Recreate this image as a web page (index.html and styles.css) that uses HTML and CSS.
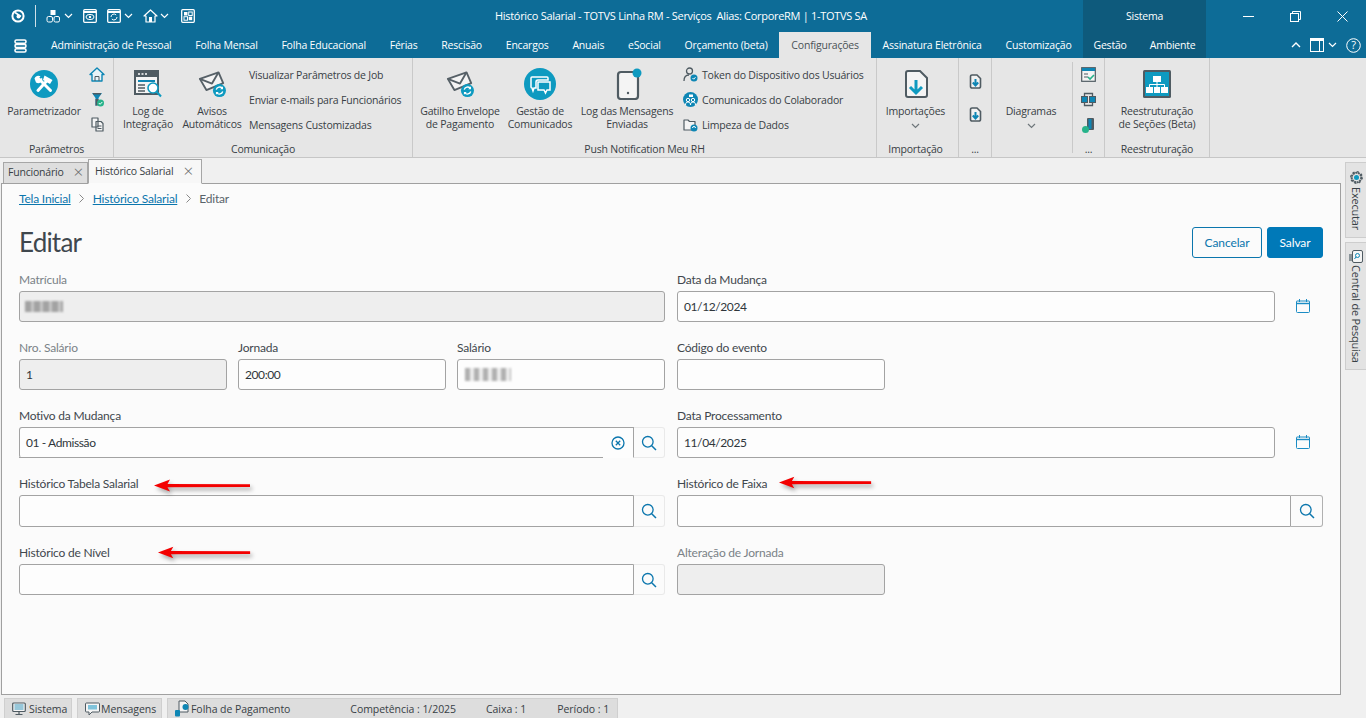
FILE: index.html
```html
<!DOCTYPE html>
<html lang="pt-BR">
<head>
<meta charset="utf-8">
<title>Histórico Salarial</title>
<link rel="stylesheet" href="styles.css">
</head>
<body>
<svg class="defs" width="0" height="0" aria-hidden="true">
  <defs>
    <symbol id="env" viewBox="0 0 30 30">
      <g fill="none" stroke="#566067" stroke-width="2" stroke-linejoin="round">
        <path d="M2 9.500 22 2.500 27 14 9 21.500Z" fill="#f4f4f4"/>
        <path d="M2 9.500 15 14.500 22 2.500"/>
      </g>
      <circle cx="23" cy="22" r="7" fill="#0e9ac0"/>
      <path d="M19.500 21a3.800 3.800 0 0 1 6.500-1.500M26.500 23a3.800 3.800 0 0 1-6.500 1.500" fill="none" stroke="#fff" stroke-width="1.400"/>
      <path d="M26.800 17.500v3h-3zM19.200 26.500v-3h3z" fill="#fff"/>
    </symbol>
    <symbol id="search" viewBox="0 0 16 16">
      <circle cx="6.800" cy="6.800" r="5.300" fill="none" stroke="#0b76ad" stroke-width="1.300"/>
      <path d="M10.700 10.700 15 15" stroke="#0b76ad" stroke-width="1.500" fill="none"/>
    </symbol>
    <symbol id="cal" viewBox="0 0 14 15">
      <path d="M1 3h12a.5.5 0 0 1 .5.5v10a1 1 0 0 1-1 1h-11a1 1 0 0 1-1-1v-10A.5.5 0 0 1 1 3Z" fill="none" stroke="#1b8cc4" stroke-width="1"/>
      <path d="M.5 5.500h13" stroke="#1b8cc4" stroke-width="1.400"/>
      <path d="M3.500 1v3M10.500 1v3" stroke="#1b8cc4" stroke-width="1"/>
    </symbol>
    <symbol id="doc" viewBox="0 0 13 15">
      <path d="M3 1h5l3.500 3.500V12.500a1.500 1.500 0 0 1-1.500 1.500H3a1.500 1.500 0 0 1-1.500-1.500v-10A1.500 1.500 0 0 1 3 1Z" fill="#f2f2f2" stroke="#4f5b62" stroke-width="1.600"/>
      <path d="M6.500 5v6M3.800 8.500l2.700 3 2.700-3" fill="none" stroke="#0e86b4" stroke-width="2"/>
    </symbol>
    <symbol id="chev" viewBox="0 0 9 6">
      <path d="M1 1l3.500 3.500L8 1" fill="none" stroke="currentColor" stroke-width="1.200"/>
    </symbol>
    <symbol id="arrow" viewBox="0 0 100 14">
      <path d="M1 6.500 17 .5 14.500 5 97 5.200V8L14.500 8.200 17 12.500Z" fill="#f30000"/>
    </symbol>
  </defs>
</svg>

<div class="app">
  <header class="titlebar">
    <div class="qat">
      <svg class="q-logo" width="14" height="14" viewBox="0 0 14 14"><circle cx="7" cy="7" r="5.600" fill="none" stroke="#fff" stroke-width="2"/><path d="M4 3.500 10 7.500" stroke="#fff" stroke-width="1.600"/><circle cx="7.500" cy="7.500" r="2" fill="#fff"/></svg>
      <span class="q-div"></span>
      <svg class="q-a" width="15" height="14" viewBox="0 0 15 14"><rect x="4.500" y="1" width="5" height="5" fill="#fff"/><rect x="1" y="7.500" width="5.500" height="5.500" rx="1.500" fill="none" stroke="#fff"/><rect x="8" y="7.500" width="5.500" height="5.500" rx="1.500" fill="none" stroke="#fff"/></svg>
      <svg class="q-chev" width="9" height="6"><use href="#chev"/></svg>
      <svg class="q-b" width="14" height="14" viewBox="0 0 14 14"><rect x=".7" y=".7" width="12.600" height="12.600" rx="1" fill="none" stroke="#fff" stroke-width="1.300"/><path d="M1 3h12" stroke="#fff" stroke-width="2"/><ellipse cx="7" cy="8" rx="4" ry="2.600" fill="none" stroke="#fff"/><circle cx="7" cy="8" r="1.200" fill="#fff"/></svg>
      <svg class="q-c" width="14" height="14" viewBox="0 0 14 14"><rect x=".7" y=".7" width="12.600" height="12.600" rx="1" fill="none" stroke="#fff" stroke-width="1.300"/><path d="M1 3h12" stroke="#fff" stroke-width="2"/><path d="M4 8a3 3 0 0 1 5.200-2M10 8a3 3 0 0 1-5.200 2" fill="none" stroke="#fff"/></svg>
      <svg class="q-chev" width="9" height="6"><use href="#chev"/></svg>
      <svg class="q-d" width="15" height="14" viewBox="0 0 15 14"><path d="M7.500 1 14 7h-2v6H3V7H1Z" fill="none" stroke="#fff" stroke-width="1.200" stroke-linejoin="round"/><rect x="6" y="8" width="3" height="5" fill="#fff"/></svg>
      <svg class="q-chev q-chev-d" width="9" height="6"><use href="#chev"/></svg>
      <svg class="q-e" width="14" height="14" viewBox="0 0 14 14"><rect x=".7" y=".7" width="12.600" height="12.600" rx="1" fill="none" stroke="#fff" stroke-width="1.300"/><rect x="3" y="3" width="3.500" height="3.500" fill="#fff"/><rect x="7.700" y="3" width="3.500" height="3.500" fill="none" stroke="#fff"/><rect x="3" y="7.700" width="3.500" height="3.500" fill="none" stroke="#fff"/><rect x="7.700" y="7.700" width="3.500" height="3.500" fill="#fff"/></svg>
    </div>
    <div class="app-title">Histórico Salarial - TOTVS Linha RM - Serviços&nbsp; Alias: CorporeRM | 1-TOTVS SA</div>
    <div class="ctx-title">Sistema</div>
    <div class="winctl">
      <svg width="11" height="11" viewBox="0 0 11 11"><path d="M0 5.500h11" stroke="#fff"/></svg>
      <svg width="11" height="11" viewBox="0 0 11 11"><rect x=".5" y="2.500" width="8" height="8" fill="none" stroke="#fff"/><path d="M2.500 2.500v-2h8v8h-2" fill="none" stroke="#fff"/></svg>
      <svg width="11" height="11" viewBox="0 0 11 11"><path d="M.5.500l10 10M10.500.500l-10 10" stroke="#fff"/></svg>
    </div>
  </header>

  <nav class="tabsbar">
    <div class="tabs-main">
      <svg class="menu-ico" width="13" height="14" viewBox="0 0 13 14"><g fill="none" stroke="#fff" stroke-width="1.600"><rect x="1" y="1" width="11" height="3.200" rx="1.500"/><rect x="1" y="5.400" width="11" height="3.200" rx="1.500"/><rect x="1" y="9.800" width="11" height="3.200" rx="1.500"/></g></svg>
      <span class="rtab">Administração de Pessoal</span>
      <span class="rtab">Folha Mensal</span>
      <span class="rtab">Folha Educacional</span>
      <span class="rtab">Férias</span>
      <span class="rtab">Rescisão</span>
      <span class="rtab">Encargos</span>
      <span class="rtab">Anuais</span>
      <span class="rtab">eSocial</span>
      <span class="rtab">Orçamento (beta)</span>
      <span class="rtab rtab-on">Configurações</span>
      <span class="rtab">Assinatura Eletrônica</span>
      <span class="rtab">Customização</span>
    </div>
    <div class="ctx-tabs">
      <span class="rtab rtab-ctx">Gestão</span>
      <span class="rtab rtab-ctx">Ambiente</span>
    </div>
    <div class="rb-tools">
      <svg width="10" height="6" viewBox="0 0 10 6"><path d="M1 5l4-4 4 4" fill="none" stroke="#fff" stroke-width="1.400"/></svg>
      <svg class="rb-panel" width="14" height="14" viewBox="0 0 14 14"><rect x=".5" y=".5" width="13" height="13" fill="none" stroke="#fff"/><rect x="1" y="1" width="12" height="2" fill="#fff"/><path d="M9.500 3v10" stroke="#fff"/></svg>
      <svg class="rb-chev" width="9" height="6"><use href="#chev"/></svg>
      <svg class="rb-help" width="15" height="15" viewBox="0 0 15 15"><circle cx="7.500" cy="7.500" r="6.800" fill="none" stroke="#fff"/><text x="7.500" y="11.200" text-anchor="middle" class="help-q">?</text></svg>
    </div>
  </nav>

  <section class="ribbon">
    <div class="group g-param">
      <div class="g-body">
        <div class="big b-param">
          <svg class="big-ico" width="28" height="28" viewBox="0 0 28 28"><circle cx="14" cy="14" r="14" fill="#0e9ac0"/><g stroke="#fff" fill="none" stroke-linecap="round"><path d="M8 20.500 18 9.500" stroke-width="3"/><path d="M9 9 20.500 20.500" stroke-width="3"/></g><path d="M14.500 5.500l8 4.500-2.500 4-7-4zM4.500 8.500a4 4 0 0 1 6-2.200L8.300 9l1 1 2.700-2.200a4 4 0 0 1-6 4.700z" fill="#fff"/></svg>
          <span class="big-t">Parametrizador</span>
        </div>
        <div class="icol">
          <span class="irow"><svg width="16" height="15" viewBox="0 0 16 15"><path d="M8 1 15 7.500h-2V14H3V7.500H1Z" fill="#e8f4f8" stroke="#0e86b4" stroke-width="1.400" stroke-linejoin="round"/><path d="M6 14V9.500h4V14" fill="none" stroke="#4f5b62"/></svg></span>
          <span class="irow"><svg width="13" height="15" viewBox="0 0 13 15"><path d="M1 1h10L7.500 6v6.500L4.500 14V6Z" fill="#0e86b4"/><path d="M2 1h8v1.500H2z" fill="#4f5b62"/><path d="M4.500 7h3v6.500h-3z" fill="#4f5b62"/><circle cx="9.500" cy="11" r="3.500" fill="#26b38a"/><path d="M7.800 11l1.300 1.300 2.200-2.300" stroke="#fff" fill="none"/></svg></span>
          <span class="irow"><svg width="13" height="15" viewBox="0 0 13 15"><path d="M1 1h6v9H1zM5 4.500h5l2 2V14H5z" fill="#f5f5f5" stroke="#4f5b62" stroke-width="1.200" stroke-linejoin="round"/><path d="M6.500 9h4M6.500 11.500h4" stroke="#4f5b62"/></svg></span>
        </div>
      </div>
      <div class="g-label">Parâmetros</div>
    </div>

    <div class="group g-com">
      <div class="g-body">
        <div class="big b-log">
          <svg class="big-ico" width="28" height="28" viewBox="0 0 28 28"><rect x="1" y="1" width="23" height="23" fill="#f4f4f4" stroke="#4f5b62" stroke-width="2"/><rect x="1" y="1" width="23" height="6" fill="#4f5b62"/><path d="M4 4h2M7.500 4h2M11 4h2" stroke="#fff" stroke-width="1.500"/><path d="M4 11h17" stroke="#0e86b4" stroke-width="2"/><path d="M4 15h7M4 18h7M4 21h7" stroke="#4f5b62" stroke-width="1.300"/><circle cx="19" cy="18" r="5" fill="#fff" stroke="#0e9ac0" stroke-width="1.600"/><path d="M22.500 21.500 27 26.500" stroke="#0e9ac0" stroke-width="2"/></svg>
          <span class="big-t">Log de<br>Integração</span>
        </div>
        <div class="big b-avisos">
          <svg class="big-ico" width="30" height="30"><use href="#env"/></svg>
          <span class="big-t">Avisos<br>Automáticos</span>
        </div>
        <div class="tcol t-com">
          <span class="trow">Visualizar Parâmetros de Job</span>
          <span class="trow">Enviar e-mails para Funcionários</span>
          <span class="trow">Mensagens Customizadas</span>
        </div>
      </div>
      <div class="g-label">Comunicação</div>
    </div>

    <div class="group g-push">
      <div class="g-body">
        <div class="big b-gat">
          <svg class="big-ico" width="30" height="30"><use href="#env"/></svg>
          <span class="big-t">Gatilho Envelope<br>de Pagamento</span>
        </div>
        <div class="big b-gest">
          <svg class="big-ico big-ico-32" width="32" height="32" viewBox="0 0 32 32"><circle cx="16" cy="16" r="16" fill="#0e9ac0"/><path d="M8 9h15a1 1 0 0 1 1 1v2H14a2 2 0 0 0-2 2v6H10l-1 3-1-3a1 1 0 0 1-1-1V10a1 1 0 0 1 1-1Z" fill="none" stroke="#fff" stroke-width="1.500"/><path d="M14 14h12v8h-3l-1.500 3L20 22h-6Z" fill="none" stroke="#fff" stroke-width="1.500"/></svg>
          <span class="big-t">Gestão de<br>Comunicados</span>
        </div>
        <div class="big b-msg">
          <svg class="big-ico big-ico-32" width="30" height="32" viewBox="0 0 30 32"><rect x="6" y="4" width="20" height="27" rx="3" fill="#f4f4f4" stroke="#4f5b62" stroke-width="2.200"/><circle cx="16" cy="25" r="1.200" fill="#4f5b62"/><circle cx="25" cy="5" r="4.500" fill="#0e9ac0"/></svg>
          <span class="big-t">Log das Mensagens<br>Enviadas</span>
        </div>
        <div class="tcol t-push">
          <span class="trow"><svg class="tico" width="15" height="15" viewBox="0 0 15 15"><circle cx="6.500" cy="4" r="3" fill="none" stroke="#4f5b62" stroke-width="1.300"/><path d="M1 14c0-4 2-6 5-6" fill="none" stroke="#4f5b62" stroke-width="1.300"/><circle cx="11" cy="11" r="3.500" fill="#0e86b4"/><path d="M9.500 11l1.200 1.200 1.800-2" stroke="#fff" fill="none"/></svg>Token do Dispositivo dos Usuários</span>
          <span class="trow"><svg class="tico" width="15" height="15" viewBox="0 0 15 15"><circle cx="7.500" cy="7.500" r="7.500" fill="#0e86b4"/><circle cx="5" cy="8" r="1.700" fill="none" stroke="#fff"/><circle cx="10" cy="8" r="1.700" fill="none" stroke="#fff"/><path d="M2.500 13c0-2 1-3 2.500-3s2.500 1 2.500 3M7.500 13c0-2 1-3 2.500-3s2.500 1 2.500 3" fill="none" stroke="#fff"/><rect x="6" y="2.500" width="4" height="2.500" fill="#fff"/></svg>Comunicados do Colaborador</span>
          <span class="trow"><svg class="tico" width="15" height="15" viewBox="0 0 15 15"><path d="M1 3h4l1.500 1.500H12V13H1Z" fill="#f4f4f4" stroke="#4f5b62" stroke-width="1.200" stroke-linejoin="round"/><circle cx="11" cy="11" r="3.500" fill="#0e86b4"/><path d="M9.500 11a1.500 1.500 0 0 1 3 0" fill="none" stroke="#fff"/></svg>Limpeza de Dados</span>
        </div>
      </div>
      <div class="g-label">Push Notification Meu RH</div>
    </div>

    <div class="group g-imp">
      <div class="g-body">
        <div class="big b-imp">
          <svg class="big-ico" width="24" height="28" viewBox="0 0 24 28"><path d="M4 1h12l7 7v17a2 2 0 0 1-2 2H4a2 2 0 0 1-2-2V3a2 2 0 0 1 2-2Z" fill="#f4f4f4" stroke="#4f5b62" stroke-width="2"/><path d="M12 10v13M6 17l6 6 6-6" fill="none" stroke="#0e9ac0" stroke-width="3"/></svg>
          <span class="big-t">Importações</span>
          <svg class="dd" width="9" height="6"><use href="#chev"/></svg>
        </div>
      </div>
      <div class="g-label g-label-imp">Importação</div>
    </div>

    <div class="group g-i1">
      <div class="g-body g-docs">
        <svg width="13" height="15"><use href="#doc"/></svg>
        <svg width="13" height="15"><use href="#doc"/></svg>
      </div>
      <div class="g-label g-dots">...</div>
    </div>

    <div class="group g-diag">
      <div class="g-body">
        <div class="big b-diag">
          <span class="big-t">Diagramas</span>
          <svg class="dd" width="9" height="6"><use href="#chev"/></svg>
        </div>
      </div>
      <div class="g-label">&nbsp;</div>
    </div>

    <div class="group g-i2">
      <div class="g-body">
        <div class="icol icol-w">
          <span class="irow"><svg width="15" height="15" viewBox="0 0 15 15"><rect x=".7" y=".7" width="13.600" height="13.600" fill="#f4f4f4" stroke="#4f5b62" stroke-width="1.200"/><rect x="1" y="1" width="13" height="3" fill="#0e86b4"/><path d="M3 7h4M3 10h4" stroke="#4f5b62"/><path d="M7 10l2 2 4-4" stroke="#26b38a" stroke-width="1.600" fill="none"/></svg></span>
          <span class="irow"><svg width="15" height="15" viewBox="0 0 15 15"><path d="M3.500 4V1.500h8V4M3.500 11v2.500h8V11" fill="none" stroke="#4f5b62" stroke-width="1.300"/><rect x=".5" y="4.500" width="6" height="6" fill="#0e86b4" stroke="#4f5b62"/><rect x="8.500" y="4.500" width="6" height="6" fill="#0e86b4" stroke="#4f5b62"/></svg></span>
          <span class="irow"><svg width="13" height="16" viewBox="0 0 13 16"><rect x="5" y="1" width="7" height="12" rx="1" fill="#4f5b62"/><rect x="6.500" y="2" width="3" height="10" fill="#0e86b4"/><circle cx="3.500" cy="12.500" r="3.500" fill="#26b38a"/></svg></span>
        </div>
      </div>
      <div class="g-label g-dots">...</div>
    </div>

    <div class="group g-ree">
      <div class="g-body">
        <div class="big b-ree">
          <svg class="big-ico" width="28" height="28" viewBox="0 0 28 28"><rect x="0" y="0" width="28" height="28" rx="1.500" fill="#4f5b62"/><rect x="2" y="2" width="24" height="24" fill="#0e9ac0"/><rect x="10" y="6" width="8" height="6" fill="#fff"/><rect x="3" y="17" width="7" height="6" fill="#fff"/><rect x="18" y="17" width="7" height="6" fill="#fff"/><rect x="11" y="17" width="6" height="6" fill="#fff"/><path d="M14 12v5M6.500 17v-2.500h15V17" fill="none" stroke="#fff"/></svg>
          <span class="big-t">Reestruturação<br>de Seções (Beta)</span>
        </div>
      </div>
      <div class="g-label">Reestruturação</div>
    </div>
  </section>

  <div class="work">
    <div class="docs">
      <div class="docbar">
        <div class="doc-tab">Funcionário<span class="x">×</span></div>
        <div class="doc-tab doc-tab-on">Histórico Salarial<span class="x">×</span></div>
      </div>
      <main class="content">
        <div class="crumbs">
          <a class="crumb">Tela Inicial</a>
          <svg class="sep" width="5" height="9" viewBox="0 0 5 9"><path d="M.5.500l4 4-4 4" fill="none" stroke="#888"/></svg>
          <a class="crumb">Histórico Salarial</a>
          <svg class="sep" width="5" height="9" viewBox="0 0 5 9"><path d="M.5.500l4 4-4 4" fill="none" stroke="#888"/></svg>
          <span class="crumb-cur">Editar</span>
        </div>
        <div class="pagehead">
          <h1>Editar</h1>
          <div class="actions">
            <button class="btn btn-sec">Cancelar</button>
            <button class="btn btn-pri">Salvar</button>
          </div>
        </div>
        <div class="form">
          <div class="field">
            <label class="lbl lbl-off">Matrícula</label>
            <div class="input input-off"><span class="blur blur-a"></span></div>
          </div>
          <div class="field">
            <label class="lbl">Data da Mudança</label>
            <div class="withcal">
              <div class="input">01/12/2024</div>
              <span class="calslot"><svg width="14" height="15"><use href="#cal"/></svg></span>
            </div>
          </div>

          <div class="tri">
            <div class="field">
              <label class="lbl lbl-off">Nro. Salário</label>
              <div class="input input-off">1</div>
            </div>
            <div class="field">
              <label class="lbl">Jornada</label>
              <div class="input">200:00</div>
            </div>
            <div class="field">
              <label class="lbl">Salário</label>
              <div class="input"><span class="blur blur-b"></span></div>
            </div>
          </div>
          <div class="field">
            <label class="lbl">Código do evento</label>
            <div class="input input-s"></div>
          </div>

          <div class="field">
            <label class="lbl">Motivo da Mudança</label>
            <div class="lookup">
              <div class="input lk-in lk-clear">01 - Admissão
                <svg class="clear" width="14" height="14" viewBox="0 0 14 14"><circle cx="7" cy="7" r="6" fill="none" stroke="#0b76ad" stroke-width="1.300"/><path d="M4.800 4.800l4.400 4.400M9.200 4.800l-4.400 4.400" stroke="#0b76ad" stroke-width="1.300"/></svg>
              </div>
              <span class="lk-btn"><svg width="16" height="16"><use href="#search"/></svg></span>
            </div>
          </div>
          <div class="field">
            <label class="lbl">Data Processamento</label>
            <div class="withcal">
              <div class="input">11/04/2025</div>
              <span class="calslot"><svg width="14" height="15"><use href="#cal"/></svg></span>
            </div>
          </div>

          <div class="field">
            <label class="lbl">Histórico Tabela Salarial</label>
            <div class="lookup lookup-tall">
              <div class="input lk-in"></div>
              <span class="lk-btn"><svg width="16" height="16"><use href="#search"/></svg></span>
            </div>
          </div>
          <div class="field">
            <label class="lbl">Histórico de Faixa</label>
            <div class="lookup lookup-tall">
              <div class="input lk-in"></div>
              <span class="lk-btn lk-btn-dark"><svg width="16" height="16"><use href="#search"/></svg></span>
            </div>
          </div>

          <div class="field">
            <label class="lbl">Histórico de Nível</label>
            <div class="lookup">
              <div class="input lk-in"></div>
              <span class="lk-btn"><svg width="16" height="16"><use href="#search"/></svg></span>
            </div>
          </div>
          <div class="field">
            <label class="lbl lbl-off">Alteração de Jornada</label>
            <div class="input input-off input-s"></div>
          </div>
        </div>

        <svg class="arrow arrow-1" width="100" height="14"><use href="#arrow"/></svg>
        <svg class="arrow arrow-2" width="96" height="14"><use href="#arrow"/></svg>
        <svg class="arrow arrow-3" width="96" height="14"><use href="#arrow"/></svg>
      </main>
    </div>
    <aside class="side">
      <div class="stab stab-a">
        <svg width="15" height="15" viewBox="0 0 15 15"><circle cx="7.500" cy="7.500" r="4.800" fill="none" stroke="#4f5b62" stroke-width="2" stroke-dasharray="2 .6"/><circle cx="7.500" cy="7.500" r="5.800" fill="none" stroke="#4f5b62" stroke-width="1.200" stroke-dasharray="2 2.500"/><circle cx="7.500" cy="7.500" r="2.500" fill="#0e9ac0"/></svg>
        <span class="stext">Executar</span>
      </div>
      <div class="stab stab-b">
        <svg width="14" height="13" viewBox="0 0 14 13"><rect x="0" y="4" width="3" height="7" fill="#8a9499"/><rect x="3.500" y=".5" width="10" height="12" rx="1.500" fill="#f4f4f4" stroke="#4f5b62"/><circle cx="8.500" cy="5.500" r="2" fill="none" stroke="#0e86b4"/><path d="M7 7 5.500 9" stroke="#0e86b4"/></svg>
        <span class="stext">Central de Pesquisa</span>
      </div>
    </aside>
  </div>

  <footer class="status">
    <div class="st st-1">
      <svg width="14" height="14" viewBox="0 0 14 14"><rect x=".7" y="1" width="12.600" height="8.500" rx="1" fill="#f4f4f4" stroke="#4f5b62" stroke-width="1.200"/><path d="M2.500 3h9M2.500 5h9M2.500 7h9" stroke="#0e86b4" stroke-width=".8"/><path d="M7 9.500V12M3.500 12.500h7" stroke="#4f5b62" stroke-width="1.200"/></svg>
      <span>Sistema</span>
    </div>
    <div class="st st-2">
      <svg width="15" height="14" viewBox="0 0 15 14"><path d="M1.500 1h12a1 1 0 0 1 1 1v7a1 1 0 0 1-1 1H7l-3 3v-3H1.500a1 1 0 0 1-1-1V2a1 1 0 0 1 1-1Z" fill="#f4f4f4" stroke="#4f5b62"/><rect x="3" y="3" width="9" height="4.500" fill="#7fc3db"/></svg>
      <span>Mensagens</span>
    </div>
    <div class="st st-3">
      <svg width="15" height="17" viewBox="0 0 15 17"><path d="M4 1h6l3 3v8H4Z" fill="#f4f4f4" stroke="#4f5b62"/><circle cx="10.500" cy="7" r="3" fill="#0e86b4"/><rect x="0" y="10" width="5" height="6.500" rx="1" fill="#0e86b4"/></svg>
      <span class="st-f">Folha de Pagamento</span>
      <span class="st-c">Competência : 1/2025</span>
      <span class="st-k">Caixa : 1</span>
      <span class="st-p">Período : 1</span>
    </div>
  </footer>
</div>
</body>
</html>
```

FILE: styles.css
```css
* { box-sizing: border-box; }
html, body { margin: 0; padding: 0; }
body { background: #f0f0f0; overflow: hidden; font-family: "Open Sans", "Noto Sans", sans-serif; font-size: 10.5px; letter-spacing: -0.2px; color: #384045; }
.defs { position: absolute; }
.app { width: 1366px; height: 718px; display: flex; flex-direction: column; overflow: hidden; }

/* title bar */
.titlebar { height: 32px; background: #0d6c97; color: #fff; display: flex; align-items: stretch; flex: none; }
.qat { width: 495px; display: flex; align-items: center; padding-left: 11px; color: #fff; flex: none; }
.q-div { width: 1px; height: 22px; background: #cfe0e8; margin-left: 10px; }
.q-a { margin-left: 10px; }
.q-chev { margin-left: 3px; }
.q-chev-d { margin-left: 2px; }
.q-b { margin-left: 10px; }
.q-c { margin-left: 10px; }
.q-d { margin-left: 10px; }
.q-e { margin-left: 12px; }
.app-title { width: 588px; line-height: 32px; white-space: nowrap; flex: none; font-size: 11px; letter-spacing: -0.3px; }
.ctx-title { width: 123px; background: #0e5a7c; text-align: center; line-height: 32px; flex: none; }
.winctl { flex: 1; display: flex; align-items: center; gap: 36px; padding-left: 37px; }

/* ribbon tab row */
.tabsbar { height: 26px; background: #0d6c97; color: #fff; display: flex; align-items: stretch; flex: none; }
.tabs-main { width: 1083px; display: flex; align-items: stretch; flex: none; }
.menu-ico { margin: 7px 0 0 14px; width: 13px; height: 14px; flex: none; }
.rtab { padding: 0 11.9px; line-height: 26px; white-space: nowrap; flex: none; }
.rtab-ctx { padding: 0 11.5px; }
.menu-ico + .rtab { margin-left: 12.1px; }
.rtab-on { background: #e6e6e6; color: #4a5257; }
.ctx-tabs { display: flex; width: 123px; background: #0e5a7c; justify-content: center; flex: none; }
.rb-tools { display: flex; align-items: center; padding-left: 85px; color: #fff; }
.rb-panel { margin-left: 9px; }
.rb-chev { margin-left: 4px; }
.rb-help { margin-left: 9px; }
.help-q { font-size: 11px; fill: #fff; font-family: "Open Sans", sans-serif; }

/* ribbon */
.ribbon { height: 100px; background: #e6e6e6; border-bottom: 1px solid #c6c6c6; display: flex; flex: none; }
.group { display: flex; flex-direction: column; border-right: 1px solid #c9c9c9; flex: none; }
.g-body { height: 85px; display: flex; }
.g-label { height: 14px; line-height: 13px; text-align: center; white-space: nowrap; }
.g-label-imp { padding-right: 4px; }
.g-dots { line-height: 13px; }
.g-param { width: 114px; }
.g-com { width: 299px; }
.g-push { width: 464px; }
.g-imp { width: 82px; }
.g-i1 { width: 33px; }
.g-diag { width: 81px; border-right: 0; position: relative; }
.g-diag::after { content: ""; position: absolute; right: 0; top: 4px; height: 91px; width: 1px; background: #c9c9c9; }
.g-i2 { width: 32px; }
.g-ree { width: 105px; }
.big { display: flex; flex-direction: column; align-items: center; padding-top: 12px; flex: none; }
.big-ico { flex: none; margin-bottom: 7px; height: 28px; }
.big-ico-32 { margin-top: -2px; height: 32px; margin-bottom: 5px; }
.big-t { line-height: 13px; text-align: center; white-space: nowrap; }
.dd { color: #6f777b; margin-top: 5px; flex: none; }
.b-param { width: 88px; }
.b-log { width: 58px; margin-left: 5px; }
.b-avisos { width: 60px; margin-left: 5px; }
.b-gat { width: 84px; margin-left: 5px; }
.b-gest { width: 68px; margin-left: 4px; }
.b-msg { width: 96px; margin-left: 5px; }
.b-imp { width: 77px; }
.b-diag { width: 78px; padding-top: 47px; }
.b-ree { width: 104px; }
.icol { display: flex; flex-direction: column; width: 18px; padding-top: 4px; }
.icol-w { width: 31px; }
.irow { height: 25px; display: flex; align-items: center; justify-content: center; }
.tcol { display: flex; flex-direction: column; padding-top: 4px; }
.t-com { margin-left: 7px; }
.t-push { margin-left: 8px; }
.trow { height: 25px; display: flex; align-items: center; white-space: nowrap; }
.tico { margin-right: 4px; flex: none; }
.g-docs { flex-direction: column; align-items: center; padding-top: 16px; gap: 18px; }

/* work area */
.work { flex: 1; display: flex; min-height: 0; }
.docs { width: 1341px; display: flex; flex-direction: column; padding-left: 1px; flex: none; }
.docbar { height: 25px; display: flex; align-items: flex-end; padding-left: 2px; flex: none; position: relative; z-index: 1; }
.doc-tab { height: 21px; width: 85px; background: #dedede; border: 1px solid #a6a6a6; border-bottom: 0; display: flex; align-items: center; justify-content: space-between; padding: 0 4px 2px 4px; white-space: nowrap; }
.doc-tab-on { height: 25px; width: 114px; background: #f7f7f7; padding: 0 8px 1px 6px; margin-bottom: -1px; border-bottom: 1px solid #fbfbfb; }
.x { font-size: 17px; color: #666; line-height: 14px; font-weight: 300; }
.content { flex: 1; position: relative; background: #fbfbfb; border: 1px solid #a0a0a0; padding: 0 17px; font-family: "Lato", sans-serif; font-size: 12px; letter-spacing: -0.2px; color: #3f474d; }
.crumbs { height: 28px; display: flex; align-items: center; }
.crumb { color: #0b76ad; text-decoration: underline; }
.sep { margin: 0 8.5px; }
.crumb-cur { color: #59636a; }
.pagehead { height: 60px; display: flex; justify-content: space-between; align-items: flex-start; }
h1 { margin: 14px 0 0; font-weight: 400; font-size: 26px; letter-spacing: -0.8px; line-height: 32px; color: #3f474d; }
.actions { display: flex; gap: 5px; padding-top: 15px; }
.btn { height: 31px; border-radius: 3px; font-family: "Lato", sans-serif; font-size: 12px; letter-spacing: -0.1px; padding: 0; }
.btn-sec { width: 70px; background: #fbfbfb; border: 1px solid #0b76ad; color: #0b76ad; }
.btn-pri { width: 56px; background: #0079b8; border: 1px solid #0079b8; color: #fff; font-weight: 400; }
.form { display: grid; grid-template-columns: 646px 646px; column-gap: 12px; row-gap: 18px; }
.tri { display: grid; grid-template-columns: 208px 208px 208px; column-gap: 11px; }
.field { display: flex; flex-direction: column; min-width: 0; }
.lbl { height: 19px; line-height: 16px; color: #3f474d; white-space: nowrap; }
.lbl-off { color: #7a8287; }
.input { height: 31px; border: 1px solid #a3a3a3; border-radius: 3px; background: #fdfdfd; padding: 0 6px; line-height: 29px; color: #2f363b; letter-spacing: -0.4px; display: flex; align-items: center; }
.input-off { background: #eeeeee; }
.input-s { width: 208px; }
.withcal { display: flex; }
.withcal .input { flex: 1; }
.calslot { width: 48px; height: 31px; display: flex; align-items: center; justify-content: center; padding: 0 0 2px 7px; flex: none; }
.lookup { display: flex; height: 31px; }
.lookup-tall { height: 32px; }
.lookup-tall .input { height: 32px; }
.lookup-tall .lk-btn { height: 32px; }
.lk-in { flex: 1; border-radius: 3px 0 0 3px; border-right: 1px solid #a3a3a3; position: relative; }
.lk-clear { border-bottom-color: transparent; }
.lk-clear::after { content: ""; position: absolute; left: -1px; bottom: -1px; width: 584px; height: 1px; background: #a3a3a3; }
.clear { position: absolute; right: 8px; top: 8px; }
.lk-btn { width: 31px; height: 31px; border: 1px solid #e9e9e9; border-left: 0; border-radius: 0 3px 3px 0; display: flex; align-items: center; justify-content: center; flex: none; }
.lk-btn-dark { width: 32px; border-color: #b0b0b0; }
.blur { display: block; filter: blur(1px); }
.blur-a { width: 38px; height: 11px; margin-left: -1px; background: repeating-linear-gradient(90deg, #a2a2a2 0 6px, #c6c6c6 6px 9px); }
.blur-b { width: 46px; height: 13px; margin-left: 1px; background: repeating-linear-gradient(90deg, #b0b0b0 0 5px, #ececec 5px 9px); }
.arrow { position: absolute; filter: drop-shadow(2px 3px 2px rgba(0,0,0,.35)); }
.arrow-1 { left: 151px; top: 295px; }
.arrow-2 { left: 776px; top: 292px; }
.arrow-3 { left: 155px; top: 362px; }

/* side tabs */
.side { flex: 1; display: flex; flex-direction: column; gap: 4px; padding: 4px 0 0 4px; }
.stab { background: #e3e3e3; border: 1px solid #cdcdcd; border-right: 0; display: flex; flex-direction: column; align-items: center; padding-top: 7px; font-size: 11px; letter-spacing: -0.2px; }
.stab-a { height: 76px; }
.stab-b { height: 128px; }
.stext { writing-mode: vertical-rl; white-space: nowrap; margin-top: 2px; line-height: 14px; }

/* status bar */
.status { height: 23px; display: flex; gap: 5px; padding: 3px 0 0 4px; background: #f0f0f0; flex: none; letter-spacing: -0.05px; }
.st { height: 20px; background: #dddddd; border: 1px solid #cfcfcf; border-bottom: 0; display: flex; align-items: center; white-space: nowrap; }
.st svg { flex: none; }
.st-1 { width: 68px; padding-left: 7px; gap: 3px; }
.st-2 { width: 85px; padding-left: 7px; gap: 1px; }
.st-3 { width: 451px; padding-left: 7px; gap: 1px; }
.st-c { margin-left: 59px; }
.st-k { margin-left: 29px; }
.st-p { margin-left: 30px; }
```
